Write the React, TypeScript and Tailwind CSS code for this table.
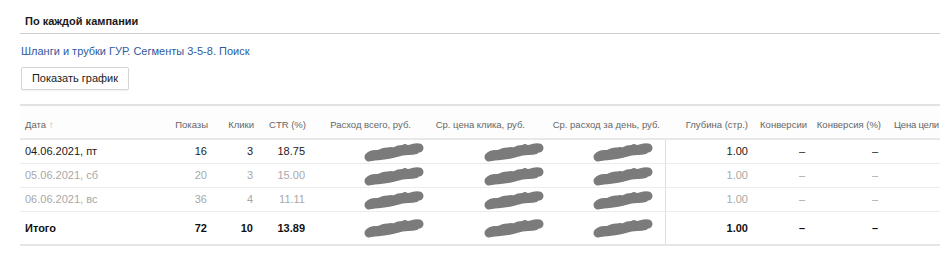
import React from 'react';

type Row = {
  date: string;
  shows: string;
  clicks: string;
  ctr: string;
  depth: string;
  conv: string;
  convPct: string;
  muted?: boolean;
  total?: boolean;
};

const rows: Row[] = [
  { date: '04.06.2021, пт', shows: '16', clicks: '3', ctr: '18.75', depth: '1.00', conv: '–', convPct: '–' },
  { date: '05.06.2021, сб', shows: '20', clicks: '3', ctr: '15.00', depth: '1.00', conv: '–', convPct: '–', muted: true },
  { date: '06.06.2021, вс', shows: '36', clicks: '4', ctr: '11.11', depth: '1.00', conv: '–', convPct: '–', muted: true },
  { date: 'Итого', shows: '72', clicks: '10', ctr: '13.89', depth: '1.00', conv: '–', convPct: '–', total: true },
];

const cols = 'grid grid-cols-[130px_58px_46px_52px_122px_120px_118px_84px_58px_74px_55px]';

// hand-drawn blot that hides money values
function Blot() {
  return (
    <svg width="62" height="20" viewBox="0 0 62 20" className="block">
      <path
        d="M6 15 C 10 11, 14 14, 19 11 S 28 12, 33 9 S 43 9, 48 7 S 55 6, 56 6"
        fill="none"
        stroke="#7b7b7b"
        strokeWidth="9"
        strokeLinecap="round"
        strokeLinejoin="round"
      />
      <path
        d="M9 16 C 17 15, 25 15, 34 12 S 46 11, 53 9"
        fill="none"
        stroke="#7b7b7b"
        strokeWidth="6"
        strokeLinecap="round"
      />
      <circle cx="14" cy="11" r="3" fill="#7b7b7b" />
      <circle cx="28" cy="8" r="3" fill="#7b7b7b" />
      <circle cx="42" cy="5" r="3" fill="#7b7b7b" />
    </svg>
  );
}

export default function App() {
  return (
    <div className="w-[940px] h-[263px] bg-white pl-5 font-['Liberation_Sans',Arial,sans-serif] text-[#1a1a1a] overflow-hidden">
      <div className="pt-[14px] pb-[4px] pl-[5px] text-[11px] font-bold leading-[15px]">По каждой кампании</div>
      <div className="border-t border-[#cfcfcf]" />

      <div className="pt-[10px] pl-[1px] text-[11px] leading-[14px] text-[#2f5a9e]">
        Шланги и трубки ГУР. Сегменты 3-5-8. Поиск
      </div>

      <div className="flex pt-[9px] pl-[1px]">
        <button className="h-[23px] w-[108px] rounded-[2px] border border-[#d5d5d5] bg-white text-[11px] text-[#222] shadow-[0_1px_1px_rgba(0,0,0,0.06)]">
          Показать график
        </button>
      </div>

      <div className="mt-[14px] w-[920px] border-t-2 border-[#e2e2e2]">
        <div className={`${cols} h-[34px] items-end pb-[6px] text-[9.5px] text-[#666] border-b-2 border-[#e8e8e8] bg-[#fdfdfd]`}>
          <div className="pl-[5px]">Дата <span className="text-[#aaa]">↑</span></div>
          <div className="text-right">Показы</div>
          <div className="text-right">Клики</div>
          <div className="text-right">CTR (%)</div>
          <div className="text-right pr-[17px]">Расход всего, руб.</div>
          <div className="text-right pr-[23px]">Ср. цена клика, руб.</div>
          <div className="text-right pr-[6px]">Ср. расход за день, руб.</div>
          <div className="text-right pr-[2px]">Глубина (стр.)</div>
          <div className="text-right pr-[1px]">Конверсии</div>
          <div className="text-right pr-[1px]">Конверсия (%)</div>
          <div className="pl-[12px] whitespace-nowrap tracking-[-0.2px]">Цена цели</div>
        </div>

        {rows.map((r) => (
          <div
            key={r.date}
            className={`${cols} items-center text-[11px] ${
              r.total ? 'h-[34px] font-bold text-[#111] border-b-2 border-[#e6e6e6]' : 'h-[24px] border-b border-[#ececec]'
            } ${r.muted ? 'text-[#a8a8a8]' : ''}`}
          >
            <div className="pl-[5px]">{r.date}</div>
            <div className="text-right pr-[1px]">{r.shows}</div>
            <div className="text-right pr-[1px]">{r.clicks}</div>
            <div className="text-right pr-[1px]">{r.ctr}</div>
            <div className="flex justify-end pr-[3px]"><Blot /></div>
            <div className="flex justify-end pr-[3px]"><Blot /></div>
            <div className="flex h-full items-center justify-end pr-[11px] border-r border-[#dedede]"><Blot /></div>
            <div className="text-right pr-[2px]">{r.depth}</div>
            <div className="text-right pr-[3px]">{r.conv}</div>
            <div className="text-right pr-[4px]">{r.convPct}</div>
            <div />
          </div>
        ))}
      </div>
    </div>
  );
}
